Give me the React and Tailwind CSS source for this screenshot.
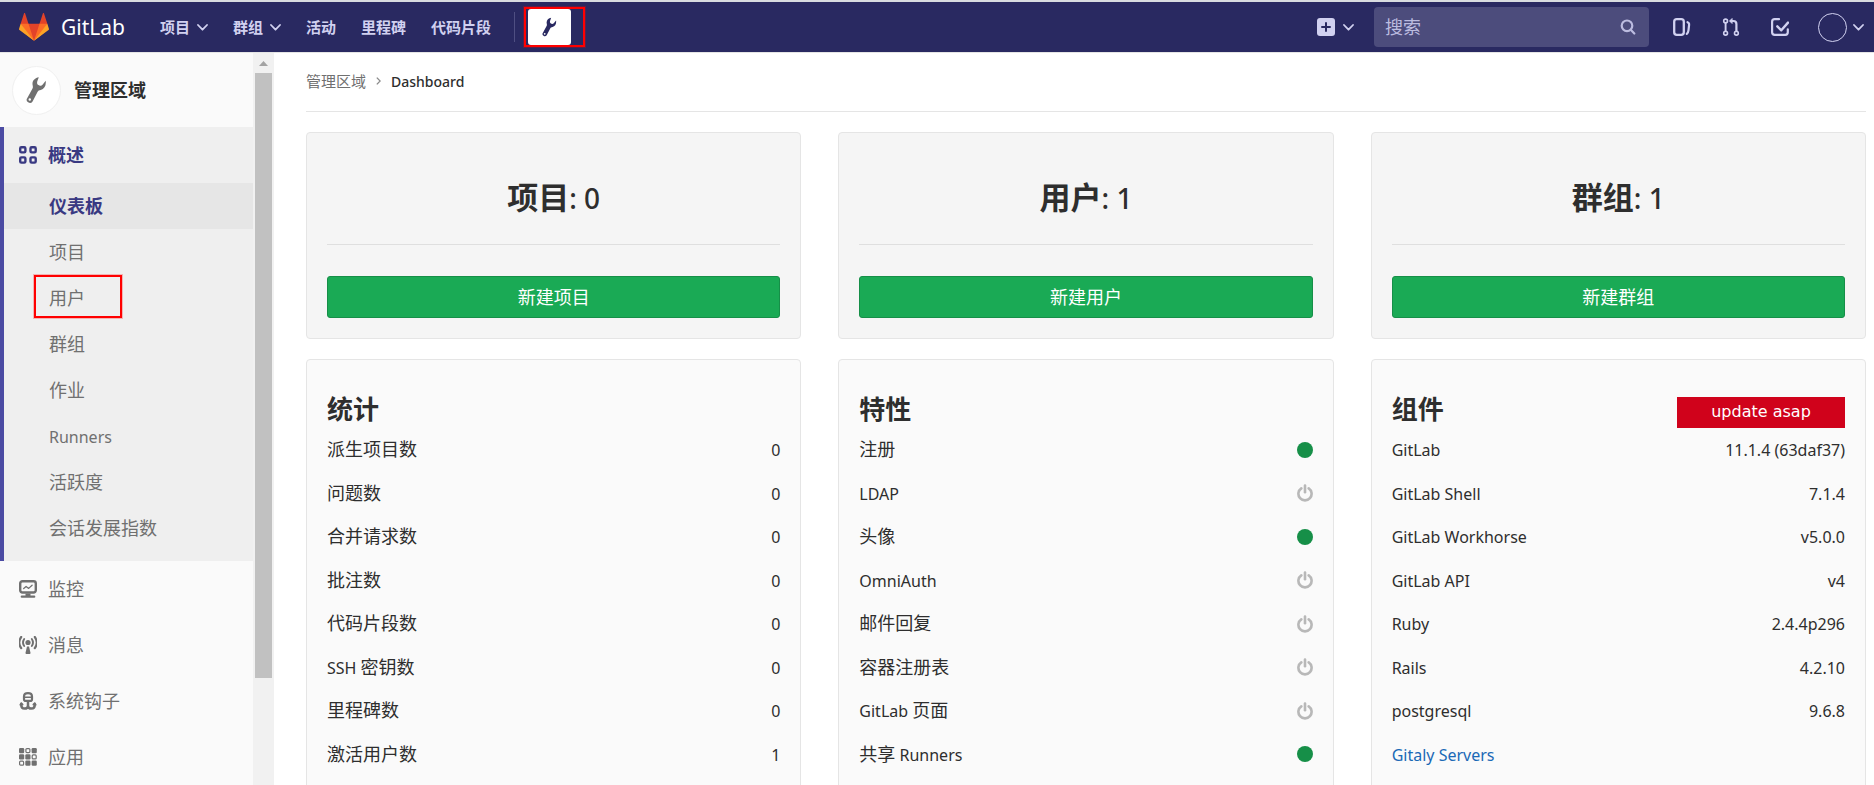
import React from "react";

const font = "font-['Noto_Sans','Noto_Sans_CJK_SC',sans-serif]";

function Tanuki() {
  return (
    <svg className="size-[30px]" viewBox="0 0 36 36" aria-hidden="true">
      <path fill="#e24329" d="M2 14l9.38 9v-9l-4-12.28c-.205-.632-1.176-.632-1.38 0z" />
      <path fill="#e24329" d="M34 14l-9.38 9v-9l4-12.28c.205-.632 1.176-.632 1.38 0z" />
      <path fill="#e24329" d="M18 34.38L3 14h30z" />
      <path fill="#fc6d26" d="M18 34.38L11.38 14H2l4 11z" />
      <path fill="#fc6d26" d="M18 34.38L24.62 14H34l-4 11z" />
      <path fill="#fca326" d="M2 14L.1 20.16c-.18.565 0 1.2.5 1.56l17.42 12.66z" />
      <path fill="#fca326" d="M34 14l1.9 6.16c.18.565 0 1.2-.5 1.56L18 34.38z" />
    </svg>
  );
}

function Wrench({ className }) {
  return (
    <svg className={className} viewBox="0 0 64 84" fill="currentColor" fillRule="evenodd" aria-hidden="true">
      <path d="M39 3C27 5 18 14 20 26c1 6 2 8-1 13L4 66a9.500 9.500 0 0 0 16 11l15-29c2-4 5-5 10-6 11-3 17-14 15-28l-9 11c-3 4-9 5-13 2-5-3-5-8-3-13zM11.500 67.500a3.800 3.800 0 1 1 0 7.600 3.800 3.800 0 0 1 0-7.600z" />
    </svg>
  );
}

function Chevron() {
  return (
    <svg className="h-[7px] w-[11px]" viewBox="0 0 11 7" fill="none" stroke="currentColor" strokeWidth="1.800" strokeLinecap="round" strokeLinejoin="round" aria-hidden="true">
      <path d="M1 1l4.500 4.700L10 1" />
    </svg>
  );
}

function Icon({ children }) {
  return (
    <svg className="size-[18px] shrink-0" viewBox="0 0 18 18" fill="none" stroke="currentColor" strokeWidth="2" strokeLinecap="round" strokeLinejoin="round" aria-hidden="true">
      {children}
    </svg>
  );
}

const OverviewIcon = () => (
  <Icon>
    <g strokeWidth="2.400">
      <rect x="1.200" y="1.200" width="5.200" height="5.200" rx="1.200" />
      <rect x="11.500" y="1.200" width="5.200" height="5.200" rx="1.200" />
      <rect x="1.200" y="11.400" width="5.200" height="5.200" rx="1.200" />
      <rect x="11.500" y="11.400" width="5.200" height="5.200" rx="1.200" />
    </g>
  </Icon>
);

const MonitorIcon = () => (
  <Icon>
    <rect x="1.200" y="1.200" width="15.600" height="11.300" rx="2.200" strokeWidth="2.400" />
    <path d="M4.700 8.500l2.400-2 2.600 1.900 3.400-3.200" strokeWidth="1.300" />
    <path d="M6.500 13.500h5v3h-5z" fill="currentColor" stroke="none" />
    <path d="M2.800 16.700h12.400" strokeWidth="2.300" />
  </Icon>
);

const BroadcastIcon = () => (
  <Icon>
    <circle cx="9" cy="6.500" r="2.600" fill="currentColor" stroke="none" />
    <path d="M8 10.500h2l1.500 6.300c.2 1-.6 1.200-1.200 1.200H7.700c-.6 0-1.400-.2-1.200-1.200z" fill="currentColor" stroke="none" />
    <path d="M2.200 1C-.2 4.200-.2 8.800 2.200 12.200M15.800 1c2.400 3.200 2.400 7.800 0 11.200" strokeWidth="2.200" />
    <path d="M5.200 3c-1.500 2.300-1.500 4.800 0 7M12.800 3c1.500 2.300 1.500 4.800 0 7" strokeWidth="1.900" />
  </Icon>
);

const HookIcon = () => (
  <Icon>
    <path d="M5 7.200V4.400C5 2.300 6.600 1.100 9 1.100s4 1.200 4 3.300v2.800c0 1.100-.8 1.700-1.800 1.700H6.800C5.800 8.900 5 8.300 5 7.200z" strokeWidth="2.200" />
    <path d="M5.500 5.200h7" strokeWidth="1.600" />
    <path d="M9 9.500v4.300M2.200 12.200c0 3 1.200 4.400 3.300 4.400S9 15.400 9 13.400c0 2 1.400 3.200 3.500 3.200s3.300-1.400 3.300-4.400" strokeWidth="2.500" />
    <path d="M1.200 12.800L2.300 11l1.400 1.600M16.800 12.800L15.700 11l-1.400 1.600" strokeWidth="1.600" />
  </Icon>
);

const filledTiles = [[0, 0], [12.6, 0], [0, 6.3], [6.3, 6.3], [6.3, 12.6], [12.6, 12.6]];
const hollowTiles = [[6.3, 0], [12.6, 6.3], [0, 12.6]];
const AppsIcon = () => (
  <Icon>
    {filledTiles.map(([x, y]) => (
      <rect key={`${x}-${y}`} x={x} y={y} width="5.200" height="5.200" rx="1.200" fill="currentColor" stroke="none" />
    ))}
    {hollowTiles.map(([x, y]) => (
      <rect key={`${x}-${y}`} x={x + 0.6} y={y + 0.6} width="4" height="4" rx="1" strokeWidth="1.200" />
    ))}
  </Icon>
);

function StatusOn() {
  return (
    <svg className="size-4" viewBox="0 0 16 16" role="img" aria-label="已启用">
      <circle cx="8" cy="8" r="8" fill="#168f48" />
    </svg>
  );
}

function StatusOff() {
  return (
    <svg className="h-[18px] w-4" viewBox="0 0 16 18" fill="none" stroke="#b8b8b8" strokeWidth="2.600" strokeLinecap="round" role="img" aria-label="已停用">
      <path d="M4.300 4.300a6.600 6.600 0 1 0 7.400 0" />
      <path d="M8 1.500v6.800" />
    </svg>
  );
}

/* Latin runs are set a step smaller so that they sit evenly beside the Chinese glyphs. */
function Mixed({ text }) {
  return (
    <span>
      {text.split(/([\x20-\x7e]+)/).map((part, i) =>
        i % 2 ? <span key={i} className="text-[16px] leading-none">{part}</span> : part
      )}
    </span>
  );
}

const subItems = ["仪表板", "项目", "用户", "群组", "作业", "Runners", "活跃度", "会话发展指数"];
const topItems = [
  ["监控", MonitorIcon],
  ["消息", BroadcastIcon],
  ["系统钩子", HookIcon],
  ["应用", AppsIcon],
];

const totals = [
  ["项目", "0"],
  ["用户", "1"],
  ["群组", "1"],
];

const stats = [
  ["派生项目数", "0"],
  ["问题数", "0"],
  ["合并请求数", "0"],
  ["批注数", "0"],
  ["代码片段数", "0"],
  ["SSH 密钥数", "0"],
  ["里程碑数", "0"],
  ["激活用户数", "1"],
];
const features = [
  ["注册", true],
  ["LDAP", false],
  ["头像", true],
  ["OmniAuth", false],
  ["邮件回复", false],
  ["容器注册表", false],
  ["GitLab 页面", false],
  ["共享 Runners", true],
];
const components = [
  ["GitLab", "11.1.4 (63daf37)"],
  ["GitLab Shell", "7.1.4"],
  ["GitLab Workhorse", "v5.0.0"],
  ["GitLab API", "v4"],
  ["Ruby", "2.4.4p296"],
  ["Rails", "4.2.10"],
  ["postgresql", "9.6.8"],
];

function Header() {
  return (
    <header className="flex h-[53px] shrink-0 items-center border-t-2 border-b border-t-[#d8dbe0] border-b-[#e5e5e5] bg-[#292961] pr-[10px] pl-[19px] text-[#d1d1f0]">
      <a href="#home" className="flex items-center gap-3 text-[21px] leading-none text-white">
        <Tanuki />
        GitLab
      </a>
      <nav className="ml-[35px] flex items-center gap-[25px] text-[15px] font-bold">
        <button type="button" className="flex items-center gap-[7px]">项目 <Chevron /></button>
        <button type="button" className="flex items-center gap-[7px]">群组 <Chevron /></button>
        <a href="#activity">活动</a>
        <a href="#milestones">里程碑</a>
        <a href="#snippets">代码片段</a>
      </nav>
      <div className="ml-[23px] h-[30px] w-px bg-[#4f4f82]" />
      <div className="relative ml-[13px]">
        <a href="#admin" aria-label="管理区域" className="flex h-9 w-[43px] items-center justify-center rounded-[3px] bg-white text-[#292961]">
          <Wrench className="h-[20px] w-[15px]" />
        </a>
        <span className="pointer-events-none absolute -top-[2px] -left-1 h-10 w-[61px] border-2 border-[#ff0000] shadow-[0_0_0_1px_rgba(255,0,0,0.25)]" />
      </div>
      <button type="button" aria-label="新建" className="ml-auto flex items-center gap-2">
        <Icon>
          <rect width="18" height="18" rx="3" fill="currentColor" stroke="none" />
          <path d="M9 5v8M5 9h8" stroke="#292961" />
        </Icon>
        <Chevron />
      </button>
      <form className="ml-5 flex h-10 w-[275px] items-center rounded bg-[#4c4c7c] pr-[13px] pl-[11px]">
        <input type="text" aria-label="搜索" placeholder="搜索" className="min-w-0 flex-1 bg-transparent text-[18px] text-white outline-none placeholder:text-[#bcbce0]" />
        <svg className="size-4 text-[#bcbce0]" viewBox="0 0 16 16" fill="none" stroke="currentColor" strokeWidth="2.200" strokeLinecap="round" aria-hidden="true">
          <circle cx="7" cy="6.800" r="5.300" />
          <path d="M11 11l3.300 3.500" />
        </svg>
      </form>
      <nav className="ml-6 flex items-center gap-[31px]">
        <a href="#issues" aria-label="议题">
          <Icon>
            <rect x="1.200" y="1.200" width="9.600" height="15.600" rx="2.600" strokeWidth="2.300" />
            <path d="M14.500 4.200c1.400.6 1.800 1.200 1.600 2.700l-.6 5.200c-.2 2-.7 3-1.700 3.700" strokeWidth="2.200" />
          </Icon>
        </a>
        <a href="#merge-requests" aria-label="合并请求">
          <Icon>
            <g strokeWidth="1.600">
              <circle cx="3.600" cy="3" r="1.900" />
              <circle cx="3.600" cy="15.200" r="1.900" />
              <circle cx="14.400" cy="15.200" r="1.900" />
              <path d="M3.600 5v8.200" strokeWidth="1.900" />
              <path d="M14.400 13.200V6c0-2-1-3-3-3H8.800" strokeWidth="2.200" />
              <path d="M9.800.8L7.600 3l2.200 2.200z" fill="currentColor" strokeWidth="1" />
            </g>
          </Icon>
        </a>
        <a href="#todos" aria-label="待办事项">
          <Icon>
            <path d="M8 1.200H3.700C2 1.200 1.100 2 1.100 3.700v10.600c0 1.700.9 2.500 2.600 2.500h10.600c1.700 0 2.500-.8 2.500-2.500v-3" strokeWidth="2.200" />
            <path d="M6.300 8.300l4 4L17 4.600" strokeWidth="2.400" />
          </Icon>
        </a>
      </nav>
      <button type="button" aria-label="用户菜单" className="ml-[29px] flex items-center gap-[6px]">
        <span className="size-[29px] rounded-full border border-[#d1d1f0]" />
        <Chevron />
      </button>
    </header>
  );
}

function Sidebar() {
  return (
    <aside className="flex w-[274px] shrink-0">
      <nav className="min-w-0 flex-1 overflow-hidden bg-[#fafafa] text-[18px] text-[#707070]">
        <a href="#admin" className="flex h-[74px] items-center gap-[13px] pl-3 font-bold text-[#2e2e2e]">
          <span className="flex size-[49px] items-center justify-center rounded-full border border-[#f0f0f0] bg-white text-[#707070]">
            <Wrench className="h-7 w-[21px]" />
          </span>
          管理区域
        </a>
        <div className="border-l-4 border-[#4b4ba3] bg-[#efefef] pb-[10px]">
          <a href="#overview" className="flex h-14 items-center gap-[11px] pl-[15px] font-bold text-[#393982]">
            <OverviewIcon />
            概述
          </a>
          <ul>
            {subItems.map((label, i) => (
              <li key={label} className="relative">
                <a
                  href={`#sub-${i}`}
                  className={
                    i === 0
                      ? "flex h-[46px] items-center bg-[#e6e6e6] pl-[45px] font-bold text-[#393982]"
                      : "flex h-[46px] items-center pl-[45px]"
                  }
                >
                  <Mixed text={label} />
                </a>
                {i === 2 && (
                  <span className="pointer-events-none absolute top-0 left-[30px] h-[43px] w-[88px] border-2 border-[#ff0000] shadow-[0_0_0_1px_rgba(255,0,0,0.25)]" />
                )}
              </li>
            ))}
          </ul>
        </div>
        {topItems.map(([label, ItemIcon], i) => (
          <a key={label} href={`#top-${i}`} className="flex h-14 items-center gap-[11px] pl-[19px]">
            <ItemIcon />
            {label}
          </a>
        ))}
      </nav>
      <div className="flex w-[21px] flex-col items-center bg-[#f1f1f1] pt-2">
        <svg className="h-[5px] w-[9px]" viewBox="0 0 9 5" aria-hidden="true">
          <path d="M4.500 0L9 5H0z" fill="#a3a3a3" />
        </svg>
        <div className="mt-[7px] mb-[107px] w-[17px] flex-1 bg-[#c1c1c1]" />
      </div>
    </aside>
  );
}

function DetailCard({ title, badge, children }) {
  return (
    <section className="rounded border border-[#e5e5e5] bg-[#fafafa] px-5 pt-[31px] pb-16">
      <div className="flex h-[37px] items-end justify-between">
        <h4 className="text-[26px] leading-[37px] font-bold">{title}</h4>
        {badge}
      </div>
      <ul className="grid min-h-[348px] auto-rows-fr">{children}</ul>
    </section>
  );
}

function Row({ label, children }) {
  return (
    <li className="flex items-center justify-between">
      {label}
      {children}
    </li>
  );
}

function Main() {
  return (
    <main className="min-w-0 flex-1 overflow-hidden pr-2 pl-8">
      <nav className="mb-5 flex h-[59px] items-center border-b border-[#e5e5e5] pb-[2px]">
        <a href="#admin" className="text-[15px] text-[#707070]">管理区域</a>
        <svg className="mx-[10px] h-2 w-[5px]" viewBox="0 0 5 8" fill="none" stroke="#8a8a8a" strokeWidth="1.300" aria-hidden="true">
          <path d="M.8.6L4.200 4 .8 7.400" />
        </svg>
        <a href="#dashboard" className="text-[14px] font-medium">Dashboard</a>
      </nav>
      <div className="grid grid-cols-3 gap-x-[37px] gap-y-5">
        {totals.map(([name, count]) => (
          <section key={name} className="rounded border border-[#e5e5e5] bg-[#f5f5f5] p-5">
            <h3 className="border-b border-[#dfdfdf] pt-6 pb-[27px] text-center text-[31px] leading-10">
              <span className="font-bold">{name}</span>
              <span className="text-[28px] leading-none font-medium">: {count}</span>
            </h3>
            <a href={`#new-${name}`} className="mt-[31px] flex h-[42px] items-center justify-center rounded-[3px] border border-[#168f48] bg-[#1aaa55] text-white">
              新建{name}
            </a>
          </section>
        ))}
        <DetailCard title="统计">
          {stats.map(([label, value]) => (
            <Row key={label} label={<Mixed text={label} />}>
              <Mixed text={value} />
            </Row>
          ))}
        </DetailCard>
        <DetailCard title="特性">
          {features.map(([label, on]) => (
            <Row key={label} label={<Mixed text={label} />}>
              {on ? <StatusOn /> : <StatusOff />}
            </Row>
          ))}
        </DetailCard>
        <DetailCard
          title="组件"
          badge={
            <span className="flex h-[31px] w-[168px] items-center justify-center bg-[#d0021b] pb-[2px] font-['DejaVu_Sans',sans-serif] text-[16px] text-white">
              update asap
            </span>
          }
        >
          {components.map(([label, value]) => (
            <Row key={label} label={<Mixed text={label} />}>
              <Mixed text={value} />
            </Row>
          ))}
          <Row label={<a href="#gitaly" className="text-[#1b69b6]"><Mixed text="Gitaly Servers" /></a>} />
        </DetailCard>
      </div>
    </main>
  );
}

export default function App() {
  return (
    <div className={`flex h-screen flex-col overflow-hidden bg-white text-[18px] text-[#2e2e2e] ${font}`}>
      <Header />
      <div className="flex min-h-0 flex-1">
        <Sidebar />
        <Main />
      </div>
    </div>
  );
}
